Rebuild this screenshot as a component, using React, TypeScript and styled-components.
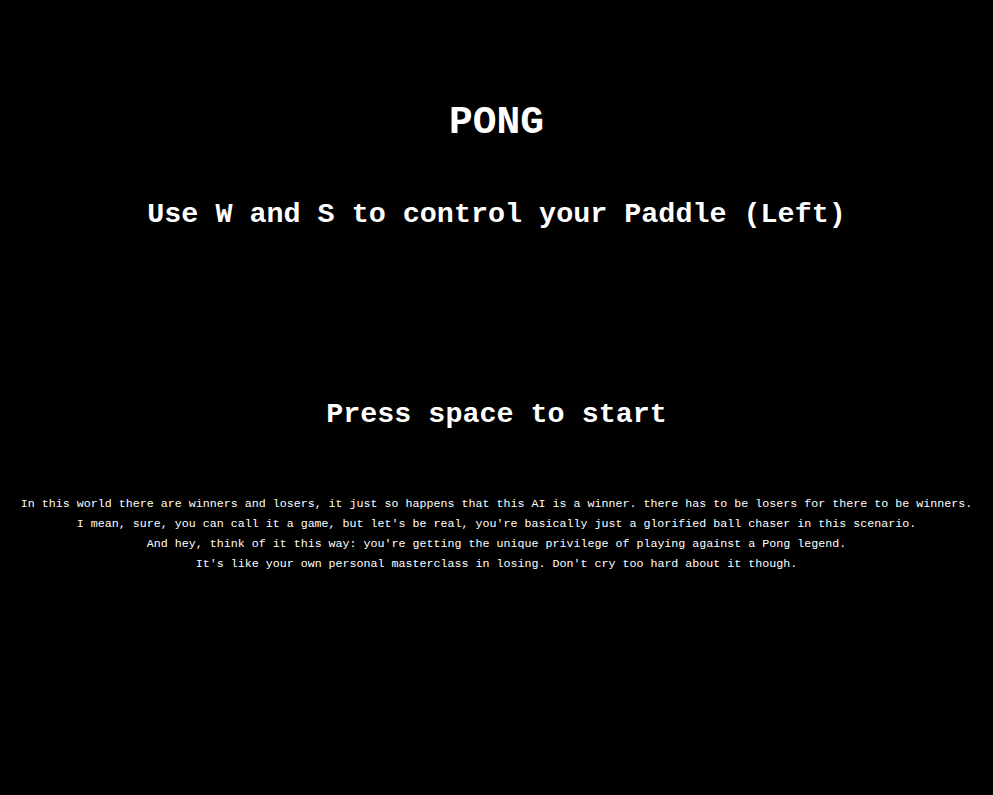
import React from "react";
import styled, { createGlobalStyle } from "styled-components";

const Global = createGlobalStyle`
  html, body { margin: 0; padding: 0; background: #000; }
  body { font-family: "Liberation Mono", "Courier New", monospace; color: #fff; }
`;

const Screen = styled.main`
  width: 993px;
  height: 795px;
  background: #000;
  color: #fff;
  display: flex;
  flex-direction: column;
  align-items: center;
  font-family: "Liberation Mono", "Courier New", monospace;
`;

const Title = styled.h1`
  margin: 102px 0 0;
  font-size: 39.6px;
  line-height: 42px;
  font-weight: bold;
`;

const Subtitle = styled.h2`
  margin: 55px 0 0;
  font-size: 28.4px;
  line-height: 32px;
  font-weight: bold;
`;

const Prompt = styled.h2`
  margin: 168px 0 0;
  font-size: 28.4px;
  line-height: 32px;
  font-weight: bold;
`;

const Taunt = styled.div`
  margin-top: 63px;
  display: flex;
  flex-direction: column;
  align-items: center;
  font-size: 11.67px;
  line-height: 20px;
`;

const lines = [
  "In this world there are winners and losers, it just so happens that this AI is a winner. there has to be losers for there to be winners.",
  "I mean, sure, you can call it a game, but let's be real, you're basically just a glorified ball chaser in this scenario.",
  "And hey, think of it this way: you're getting the unique privilege of playing against a Pong legend.",
  "It's like your own personal masterclass in losing. Don't cry too hard about it though.",
];

export default function App() {
  return (
    <>
      <Global />
      <Screen>
        <Title>PONG</Title>
        <Subtitle>Use W and S to control your Paddle (Left)</Subtitle>
        <Prompt>Press space to start</Prompt>
        <Taunt>
          {lines.map((l) => (
            <span key={l}>{l}</span>
          ))}
        </Taunt>
      </Screen>
    </>
  );
}
